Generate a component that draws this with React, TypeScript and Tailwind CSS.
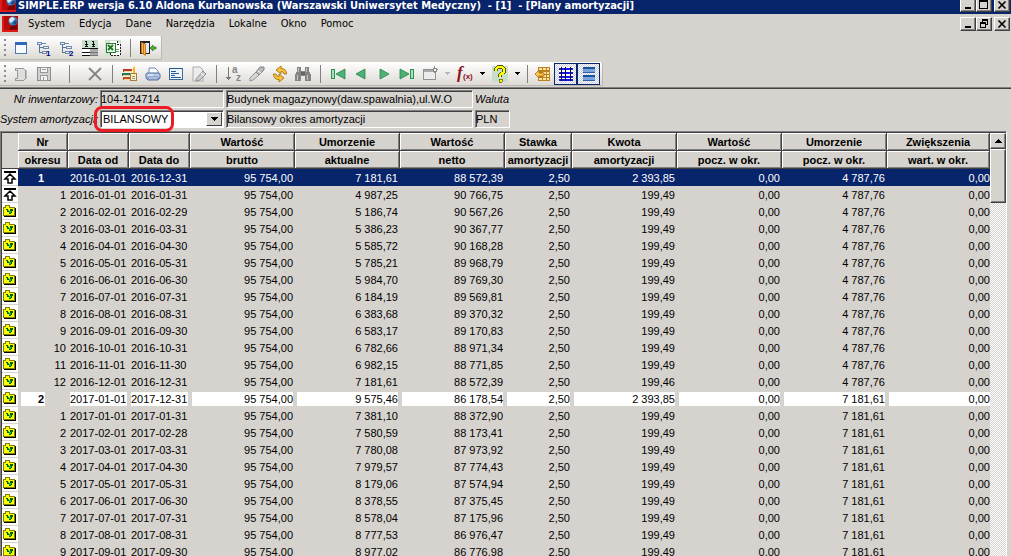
import type { FC, ReactNode } from "react";

interface Row {
  nr: number;
  from: string;
  to: string;
  depreciation: string;
  net: string;
  amount: string;
  opening: string;
  summary?: boolean;
}

const row = (
  nr: number,
  from: string,
  to: string,
  depreciation: string,
  net: string,
  amount: string,
  opening: string,
  summary = false,
): Row => ({ nr, from, to, depreciation, net, amount, opening, summary });

const rows: Row[] = [
  row(1, "2016-01-01", "2016-12-31", "7 181,61", "88 572,39", "2 393,85", "4 787,76", true),
  row(1, "2016-01-01", "2016-01-31", "4 987,25", "90 766,75", "199,49", "4 787,76"),
  row(2, "2016-02-01", "2016-02-29", "5 186,74", "90 567,26", "199,49", "4 787,76"),
  row(3, "2016-03-01", "2016-03-31", "5 386,23", "90 367,77", "199,49", "4 787,76"),
  row(4, "2016-04-01", "2016-04-30", "5 585,72", "90 168,28", "199,49", "4 787,76"),
  row(5, "2016-05-01", "2016-05-31", "5 785,21", "89 968,79", "199,49", "4 787,76"),
  row(6, "2016-06-01", "2016-06-30", "5 984,70", "89 769,30", "199,49", "4 787,76"),
  row(7, "2016-07-01", "2016-07-31", "6 184,19", "89 569,81", "199,49", "4 787,76"),
  row(8, "2016-08-01", "2016-08-31", "6 383,68", "89 370,32", "199,49", "4 787,76"),
  row(9, "2016-09-01", "2016-09-30", "6 583,17", "89 170,83", "199,49", "4 787,76"),
  row(10, "2016-10-01", "2016-10-31", "6 782,66", "88 971,34", "199,49", "4 787,76"),
  row(11, "2016-11-01", "2016-11-30", "6 982,15", "88 771,85", "199,49", "4 787,76"),
  row(12, "2016-12-01", "2016-12-31", "7 181,61", "88 572,39", "199,46", "4 787,76"),
  row(2, "2017-01-01", "2017-12-31", "9 575,46", "86 178,54", "2 393,85", "7 181,61", true),
  row(1, "2017-01-01", "2017-01-31", "7 381,10", "88 372,90", "199,49", "7 181,61"),
  row(2, "2017-02-01", "2017-02-28", "7 580,59", "88 173,41", "199,49", "7 181,61"),
  row(3, "2017-03-01", "2017-03-31", "7 780,08", "87 973,92", "199,49", "7 181,61"),
  row(4, "2017-04-01", "2017-04-30", "7 979,57", "87 774,43", "199,49", "7 181,61"),
  row(5, "2017-05-01", "2017-05-31", "8 179,06", "87 574,94", "199,49", "7 181,61"),
  row(6, "2017-06-01", "2017-06-30", "8 378,55", "87 375,45", "199,49", "7 181,61"),
  row(7, "2017-07-01", "2017-07-31", "8 578,04", "87 175,96", "199,49", "7 181,61"),
  row(8, "2017-08-01", "2017-08-31", "8 777,53", "86 976,47", "199,49", "7 181,61"),
  row(9, "2017-09-01", "2017-09-30", "8 977,02", "86 776,98", "199,49", "7 181,61"),
];

const columns = [
  { top: "Nr", bottom: "okresu", width: "w-[50px]" },
  { top: "", bottom: "Data od", width: "w-[61px]" },
  { top: "", bottom: "Data do", width: "w-[61px]" },
  { top: "Wartość", bottom: "brutto", width: "w-[105px]" },
  { top: "Umorzenie", bottom: "aktualne", width: "w-[105px]" },
  { top: "Wartość", bottom: "netto", width: "w-[105px]" },
  { top: "Stawka", bottom: "amortyzacji", width: "w-[67px]" },
  { top: "Kwota", bottom: "amortyzacji", width: "w-[105px]" },
  { top: "Wartość", bottom: "pocz. w okr.", width: "w-[105px]" },
  { top: "Umorzenie", bottom: "pocz. w okr.", width: "w-[105px]" },
  { top: "Zwiększenia", bottom: "wart. w okr.", width: "w-[103px]" },
];

const menu = ["System", "Edycja", "Dane", "Narzędzia", "Lokalne", "Okno", "Pomoc"];

const Icon: FC<{ children: ReactNode }> = ({ children }) => (
  <svg viewBox="0 0 16 16" className="w-4 h-4 shrink-0 overflow-visible" shapeRendering="crispEdges" aria-hidden="true">
    {children}
  </svg>
);

const Logo = () => (
  <Icon>
    <path d="M0 0H16V16H0z" fill="#b80a0a" />
    <path d="M0 0H2V16H0zM2 14H16V16H2z" fill="#e01818" />
    <path d="M10 9H15V14H7z" fill="#7d0000" />
    <g shapeRendering="auto">
      <circle cx="11" cy="5" r="4.6" fill="#3d7fc0" />
      <path d="M7 4Q8 1 11 1L13 3 9 7Q7 6 7 4z" fill="#d8ecfa" />
      <path d="M11 7L14 4 15 6Q14 9 12 9z" fill="#174a86" />
    </g>
  </Icon>
);

const WindowIcon = () => (
  <Icon>
    <path d="M2.5 2.5H13.5V13.5H2.5z" fill="#f6faff" stroke="#4a78b0" />
    <path d="M2 2H14V5H2z" fill="#2e6ab8" />
  </Icon>
);

const TreeIcon: FC<{ mark: string }> = ({ mark }) => (
  <Icon>
    <path d="M3.5 4V13M4 7.5H7M4 12.5H7" stroke="#5b7597" fill="none" />
    <path d="M1.5 2.5H5.5V4.5H1.5zM7.5 6.5H12.5V8.5H7.5zM6.5 11.5H10.5V13.5H6.5z" fill="#e7f0fb" stroke="#6d8cb4" />
    <path d="M6 3.5H10" stroke="#6d8cb4" />
    <text x="10" y="16" fontSize="8" fontWeight="700" fill="#00007b" fontFamily="Liberation Sans, sans-serif">
      {mark}
    </text>
  </Icon>
);

const ArchiveIcon = () => (
  <Icon>
    <path d="M0 0H16V8H0z" fill="#c7dfca" />
    <path d="M0 9H8V15H0z" fill="#fff" />
    <path d="M8 9H16V15H8z" fill="#aaa" />
    <path d="M0 8.5H16M0 12.5H8M0 15.5H8" stroke="#111" />
    <path d="M8 12.5H16M8 15.5H16" stroke="#777" />
    <path d="M3 1.5H5M4.5 2V7M3 4.5H6M3 6.5H6M10 1.5H12M11.5 2V7M10 4.5H13M10 6.5H13" stroke="#111" fill="none" />
  </Icon>
);

const SheetIcon = () => (
  <Icon>
    <path d="M0 0H16V16H0z" fill="#cfe3d2" />
    <path d="M5 1H12L15 4V15H5z" fill="#fff" />
    <path d="M12 1V4H15V15H5V13" fill="none" stroke="#222" strokeDasharray="2 1" />
    <path d="M7 9H14M7 11H14M10 5V13" stroke="#63a063" />
    <path d="M1 3H10V12H1z" fill="#eaf7ea" stroke="#2d7a35" />
    <path d="M3 5L8 10M8 5L3 10" stroke="#237a2c" strokeWidth="2" shapeRendering="auto" />
  </Icon>
);

const DoorIcon = () => (
  <Icon>
    <path d="M0 1H10V14H0z" fill="#222" />
    <path d="M5 3H9V13H5z" fill="#dceaff" />
    <path d="M1 2L6 4V16L1 13z" fill="#c87617" shapeRendering="auto" />
    <path d="M2.5 3V13M4.5 4V14" stroke="#ffb54e" />
    <path d="M10 8L13 5V7H16V9H13V11z" fill="#54b52c" stroke="#19711b" strokeWidth="0.7" shapeRendering="auto" />
  </Icon>
);

const NewIcon = () => (
  <Icon>
    <path d="M2.5 2.5H10.5L12.5 4.5V12.5L10.5 14.5H2.5V12.5H4.5V4.5H2.5z" fill="#dedede" stroke="#999" />
    <path d="M13.5 4V13" stroke="#bbb" />
  </Icon>
);

const SaveIcon = () => (
  <Icon>
    <path d="M1.5 1.5H14.5V14.5H1.5z" fill="#d2d2d2" stroke="#8d8d8d" />
    <path d="M4.5 1.5H11.5V6.5H4.5zM4.5 9.5H11.5V14.5H4.5z" fill="#f4f4f4" stroke="#999" />
    <path d="M6 3.5H10M7.5 11V14" stroke="#999" />
  </Icon>
);

const DeleteIcon = () => (
  <Icon>
    <path d="M2 2L8 8L14 14M14 2L2 14" stroke="#848484" strokeWidth="1.8" fill="none" shapeRendering="auto" />
  </Icon>
);

const BooksIcon = () => (
  <Icon>
    <path d="M1 3H10V6H1z" fill="#b83a22" />
    <path d="M0 7H9V10H0z" fill="#1f7a51" />
    <path d="M1 11H9V14H1z" fill="#c05218" />
    <path d="M2 5.5H10M1 9.5H9M2 13.5H9" stroke="#f0d5a0" />
    <path d="M8.5 7.5H14.5V14.5H8.5z" fill="#fff0c8" stroke="#a57a31" />
    <path d="M10 10.5H13M10 12.5H13" stroke="#8e8e8e" />
    <path d="M11 2L13 0 13 7 11 7z" fill="#ffb21d" shapeRendering="auto" />
  </Icon>
);

const PrinterIcon = () => (
  <Icon>
    <g shapeRendering="auto">
      <path d="M4 8V2H10L13 5V8z" fill="#fff" stroke="#7088b5" />
      <path d="M1 8Q1 7 3 7H13Q15 7 15 8V12L13 14H3L1 12z" fill="#b7c7e5" stroke="#4d6da5" />
      <path d="M3 11H13V13H3z" fill="#eef4ff" stroke="#7088b5" />
      <path d="M3 9H8" stroke="#fff" />
    </g>
  </Icon>
);

const FormIcon = () => (
  <Icon>
    <path d="M1.5 2.5H14.5V13.5H1.5z" fill="#eef5fd" stroke="#3b6994" />
    <path d="M2 2.5H14" stroke="#1d5896" />
    <path d="M3 5.5H8M3 7.5H11M3 9.5H7M3 11.5H13" stroke="#245a9c" />
  </Icon>
);

const PageIcon = () => (
  <Icon>
    <g shapeRendering="auto">
      <path d="M2 1H9L12 4V15H2z" fill="#ececec" stroke="#aaa" />
      <path d="M5 13L12 5 15 8 9 14 5 15z" fill="#ccc" stroke="#929292" />
      <path d="M10 7L13 10" stroke="#fff" />
    </g>
  </Icon>
);

const SortIcon = () => (
  <Icon>
    <path d="M2.5 1V13" stroke="#777" />
    <path d="M0 11H5L2.5 14z" fill="#777" />
    <text x="6" y="7" fontSize="10" fontWeight="700" fill="#858585" fontFamily="Liberation Sans, sans-serif">a</text>
    <text x="10" y="15" fontSize="10" fontWeight="700" fill="#858585" fontFamily="Liberation Sans, sans-serif">z</text>
  </Icon>
);

const TorchIcon = () => (
  <Icon>
    <g shapeRendering="auto">
      <path d="M1 12L7 6 10 9 4 14 1 15z" fill="#d8d8d8" stroke="#919191" />
      <path d="M7 6L11 1 15 1 15 4 10 9z" fill="#bababa" stroke="#858585" />
      <path d="M9 5L12 7" stroke="#fff" />
    </g>
  </Icon>
);

const RefreshIcon = () => (
  <Icon>
    <g shapeRendering="auto" fill="#f6c43a" stroke="#ae7110" strokeWidth="0.9">
      <path d="M4 4L9 0V2.5Q14.5 2.5 14.5 8H12Q12 5.5 9 5.5V8z" />
      <path d="M12 12L7 16V13.5Q1.5 13.5 1.5 8H4Q4 10.5 7 10.5V8z" />
    </g>
  </Icon>
);

const BinocularsIcon = () => (
  <Icon>
    <path d="M2 1H6V5H10V1H14V5L16 9V15H10V10H6V15H0V9L2 5z" fill="#858585" />
    <path d="M3.5 2V6M11.5 2V6M2.5 9V14M12.5 9V14" stroke="#c5c5c5" />
    <path d="M6 6H10V9H6z" fill="#666" />
  </Icon>
);

const ArrowIcon: FC<{ back?: boolean; end?: boolean }> = ({ back, end }) => (
  <Icon>
    <g transform={back ? "matrix(-1 0 0 1 16 0)" : undefined}>
      <path
        d={end ? "M1 3L10 8 1 13z" : "M4 3L13 8 4 13z"}
        fill="#4fb173"
        stroke="#248348"
        strokeWidth="0.8"
        shapeRendering="auto"
      />
      {end && <path d="M11.5 3.5H14.5V12.5H11.5z" fill="#a6dfb8" stroke="#2b9354" />}
    </g>
  </Icon>
);

const NewWindowIcon = () => (
  <Icon>
    <path d="M1.5 3.5H13.5V13.5H1.5z" fill="#ececec" stroke="#929292" />
    <path d="M2 5H13" stroke="#aaa" strokeWidth="2" />
    <path d="M12.5 0V7M9 3.5H16" stroke="#8b8b8b" />
    <path d="M11 2H14V5H11z" fill="#fff" stroke="#8b8b8b" />
  </Icon>
);

const FunctionIcon = () => (
  <Icon>
    <text x="0" y="12" fontSize="17" fontStyle="italic" fontWeight="700" fill="#8c1420" fontFamily="Liberation Serif, serif">f</text>
    <text x="6" y="13" fontSize="8" fontWeight="700" fill="#8c1420" fontFamily="Liberation Sans, sans-serif">(x)</text>
  </Icon>
);

const HelpIcon = () => (
  <Icon>
    <path d="M0 0H16V16H0z" fill="#c7dfca" />
    <g fill="none" strokeLinejoin="round">
      <path d="M4 5V3L6 1H10L12 3V6L8 9V11" stroke="#555500" strokeWidth="3.4" />
      <path d="M4 5V3L6 1H10L12 3V6L8 9V11" stroke="#ffff00" strokeWidth="2.4" />
    </g>
    <path d="M7 13H10V16H7z" fill="#ffff00" stroke="#555500" strokeWidth="0.7" />
  </Icon>
);

const ColumnsIcon = () => (
  <Icon>
    <path d="M3 1H15V15H3z" fill="#b98122" />
    <path d="M4 2H7V4H4zM8 2H11V4H8zM12 2H14V4H12zM8 6H11V8H8zM12 6H14V8H12zM4 12H7V14H4zM8 12H11V14H8zM12 12H14V14H12zM8 9H11V11H8zM12 9H14V11H12z" fill="#ffe4a0" />
    <path d="M0 8L4 4V7H9V10H4V12z" fill="#ffc64b" stroke="#a66914" strokeWidth="0.8" shapeRendering="auto" />
  </Icon>
);

const GridIcon = () => (
  <Icon>
    <path d="M1 1H15V15H1z" fill="#fff" />
    <path d="M1 3H15M1 7H15M1 11H15M1 14H15" stroke="#1717ee" strokeWidth="2" />
    <path d="M3.5 1V15M7.5 1V15M12.5 1V15" stroke="#101018" />
  </Icon>
);

const SplitIcon = () => (
  <Icon>
    <path d="M2 1H14V7H2zM2 9H14V15H2z" fill="#77a5dc" />
    <path d="M2 2H14M2 10H14" stroke="#15539b" strokeWidth="2" />
    <path d="M2 6.5H14M2 14.5H14" stroke="#2f62a8" />
  </Icon>
);

const UpIcon = () => (
  <svg viewBox="0 0 14 14" className="block w-[14px] h-[14px]" aria-hidden="true">
    <path d="M1 2H13" stroke="#000" strokeWidth="2" shapeRendering="crispEdges" />
    <path d="M7 4L12 9H9V13H5V9H2z" fill="#fff" stroke="#000" strokeWidth="1.5" />
  </svg>
);

const FolderIcon = () => (
  <svg viewBox="0 0 14 14" className="block w-[14px] h-[14px]" shapeRendering="crispEdges" aria-hidden="true">
    <path d="M.5 11.5V3.5H2.5V1.5H6.5V3.5H11.5V11.5z" fill="#ffff00" stroke="#808000" />
    <path d="M1 12.5H12.5V4" fill="none" stroke="#000" />
    <path d="M3 5H5V7H7V5H10V7H9V9H8V10H6V8H4V6H3z" fill="#006000" />
    <path d="M5 6H6V7H5zM6 7H8V9H6z" fill="#00c060" />
  </svg>
);

const Tool: FC<{ label: string; className?: string; children: ReactNode }> = ({
  label,
  className = "w-[23px]",
  children,
}) => (
  <button type="button" aria-label={label} className={`flex h-[22px] shrink-0 items-center justify-center ${className}`}>
    {children}
  </button>
);

const DropDown: FC<{ label: string; disabled?: boolean }> = ({ label, disabled }) => (
  <Tool label={label} className="w-3">
    <svg viewBox="0 0 5 3" className="w-[5px] h-[3px]" shapeRendering="crispEdges">
      <path d="M0 0H5L2.5 3z" fill={disabled ? "#b5b5b5" : "#000"} />
    </svg>
  </Tool>
);

const Separator: FC<{ className?: string }> = ({ className = "w-3" }) => (
  <div className={`flex h-[18px] shrink-0 justify-center ${className}`}>
    <div className="w-px bg-[#808080]" />
  </div>
);

const Toolbar: FC<{ label: string; children: ReactNode }> = ({ label, children }) => (
  <div
    role="toolbar"
    aria-label={label}
    className="flex h-6 w-fit items-center rounded-r-xs border-r border-b border-[#bcb9b3] bg-linear-to-b from-white to-[#dedbd6] pr-[2px]"
  >
    <div className="flex w-[9px] flex-col items-center gap-[3px]">
      {[0, 1, 2, 3].map((dot) => (
        <div key={dot} className="h-[2px] w-[2px] bg-[#8c8c8c]" />
      ))}
    </div>
    {children}
  </div>
);

const WindowButtons: FC<{ restore?: boolean }> = ({ restore }) => {
  const button =
    "flex h-[14px] w-4 items-center justify-center border border-t-white border-l-white border-r-[#404040] border-b-[#404040] bg-[#d6d3ce] shadow-[inset_-1px_-1px_0_#808080]";
  const svg = "w-[10px] h-[10px]";
  return (
    <div className="ml-auto flex shrink-0">
      <button type="button" aria-label="Minimalizuj" className={button}>
        <svg viewBox="0 0 10 10" className={svg} shapeRendering="crispEdges">
          <path d="M2 7H8V9H2z" />
        </svg>
      </button>
      <button type="button" aria-label={restore ? "Przywróć" : "Maksymalizuj"} className={button}>
        <svg viewBox="0 0 10 10" className={svg} shapeRendering="crispEdges" fill="none" stroke="#000">
          {restore ? (
            <path d="M3.5 4V1.5H8.5V5.5H6.5M3 .5H9M1.5 4.5H6.5V8.5H1.5zM1 3.5H7" />
          ) : (
            <path d="M.5 .5H8.5V8.5H.5zM0 1.5H9" />
          )}
        </svg>
      </button>
      <button type="button" aria-label="Zamknij" className={`ml-[2px] ${button}`}>
        <svg viewBox="0 0 10 10" className={svg} stroke="#000" strokeWidth="1.6">
          <path d="M1.5 1.5L8.5 8.5M8.5 1.5L1.5 8.5" />
        </svg>
      </button>
    </div>
  );
};

const field =
  "h-[18px] w-full min-w-0 border border-t-[#808080] border-l-[#808080] border-r-white border-b-white shadow-[inset_1px_1px_0_#404040] outline-none";

const Filters = () => (
  <form className="grid grid-cols-[98px_124px_247px_35px] items-center gap-x-[2px] gap-y-[2px] pt-px pb-[3px] whitespace-nowrap">
    <label htmlFor="inventory" className="text-right italic">
      Nr inwentarzowy:
    </label>
    <input id="inventory" readOnly value="104-124714" className={field} />
    <input aria-label="Nazwa środka" readOnly value="Budynek magazynowy(daw.spawalnia),ul.W.O" className={field} />
    <label htmlFor="currency" className="italic">
      Waluta
    </label>
    <label htmlFor="system" className="text-right italic">
      System amortyzacji:
    </label>
    <div className="relative">
      <select id="system" defaultValue="BILANSOWY" className={`block appearance-none bg-white pl-[2px] ${field}`}>
        <option>BILANSOWY</option>
      </select>
      <span className="pointer-events-none absolute top-[2px] right-[2px] flex h-[14px] w-4 items-center justify-center border border-t-white border-l-white border-r-[#404040] border-b-[#404040] bg-[#d6d3ce]">
        <svg viewBox="0 0 7 4" className="w-[7px] h-1" shapeRendering="crispEdges">
          <path d="M0 0H7L3.5 4z" />
        </svg>
      </span>
      <div className="pointer-events-none absolute -top-1 -left-[6px] h-[26px] w-20 rounded-lg border-3 border-[#ed1c24]" />
    </div>
    <input aria-label="Opis systemu" readOnly value="Bilansowy okres amortyzacji" className={field} />
    <input id="currency" readOnly value="PLN" className={field} />
  </form>
);

const headCell =
  "h-[18px] p-0 border-r border-b border-[#404040] shadow-[inset_1px_1px_0_#fff,inset_-1px_-1px_0_#808080] text-center font-bold leading-4 overflow-hidden";

const PlanTable = () => (
  <table className="min-w-0 flex-1 table-fixed border-separate border-spacing-0 whitespace-nowrap">
    <colgroup>
      <col className="w-4" />
      {columns.map((column, index) => (
        <col key={index} className={column.width} />
      ))}
    </colgroup>
    <thead>
      <tr>
        <td rowSpan={2} className="border-b border-[#404040] p-0" />
        {columns.map((column, index) => (
          <th key={index} className={headCell}>
            {column.top}
          </th>
        ))}
      </tr>
      <tr>
        {columns.map((column, index) => (
          <th key={index} className={headCell}>
            {column.bottom}
          </th>
        ))}
      </tr>
    </thead>
    <tbody>
      {rows.map((item, index) => {
        const selected = index === 0;
        const white = item.summary && !selected ? "bg-white" : "";
        const cells = [
          item.from,
          item.to,
          "95 754,00",
          item.depreciation,
          item.net,
          "2,50",
          item.amount,
          "0,00",
          item.opening,
          "0,00",
        ];
        return (
          <tr key={index} className={selected ? "bg-[#08246b] text-white" : ""}>
            <td className="h-[17px] border-b border-[#d6d3ce] bg-white p-0 pl-px">
              {index < 2 ? <UpIcon /> : <FolderIcon />}
            </td>
            <td className="p-0 pr-[2px] pl-[3px] text-right">
              <span className={`block h-[14px] leading-[14px] ${item.summary ? "w-6 pr-px font-bold" : ""} ${white}`}>
                {item.nr}
              </span>
            </td>
            {cells.map((cell, column) => (
              <td key={column} className={`p-0 pl-[2px] ${column < 2 ? "pr-[2px] text-left" : column < 9 ? "pr-[2px] text-right" : "text-right"}`}>
                <span className={`block h-[14px] leading-[14px] ${white}`}>{cell}</span>
              </td>
            ))}
          </tr>
        );
      })}
    </tbody>
  </table>
);

const ScrollBar = () => (
  <div className="flex w-4 shrink-0 flex-col bg-[conic-gradient(#fff_25%,#d6d3ce_0_50%,#fff_0_75%,#d6d3ce_0)] bg-size-[2px_2px]">
    <button
      type="button"
      aria-label="Przewiń w górę"
      className="flex h-4 items-center justify-center border border-t-white border-l-white border-r-[#404040] border-b-[#404040] bg-[#d6d3ce] shadow-[inset_-1px_-1px_0_#808080]"
    >
      <svg viewBox="0 0 7 4" className="w-[7px] h-1" shapeRendering="crispEdges">
        <path d="M0 4H7L3.5 0z" />
      </svg>
    </button>
    <div className="h-[54px] border border-t-white border-l-white border-r-[#404040] border-b-[#404040] bg-[#d6d3ce] shadow-[inset_-1px_-1px_0_#808080]" />
  </div>
);

const App = () => {
  return (
    <div className="flex h-screen flex-col overflow-hidden bg-[#d6d3ce] font-['Liberation_Sans',Arial,sans-serif] text-[11px] text-black">
      <header className="flex h-[14px] shrink-0 items-end gap-[2px] overflow-hidden bg-[#08246b] pr-px pb-[2px] font-['DejaVu_Sans_Condensed','DejaVu_Sans',sans-serif]">
        <Logo />
        <h1 className="pb-px text-[11px] leading-[11px] font-bold whitespace-pre text-white">
          SIMPLE.ERP wersja 6.10 Aldona Kurbanowska (Warszawski Uniwersytet Medyczny)  - [1]  - [Plany amortyzacji]
        </h1>
        <WindowButtons />
      </header>

      <nav className="flex h-[22px] shrink-0 items-center gap-[2px] pr-px pb-[2px] pl-[2px] font-['DejaVu_Sans_Condensed','DejaVu_Sans',sans-serif]">
        <Logo />
        <div className="flex">
          {menu.map((item) => (
            <button key={item} type="button" className="px-[7px] first:pl-2">
              {item}
            </button>
          ))}
        </div>
        <WindowButtons restore />
      </nav>

      <div className="flex shrink-0 flex-col gap-[2px] border-b border-[#404040] pb-[2px] shadow-[inset_0_-1px_0_#808080]">
        <Toolbar label="Aplikacja">
          <Tool label="Okno"><WindowIcon /></Tool>
          <Tool label="Drzewo 1"><TreeIcon mark="1" /></Tool>
          <Tool label="Drzewo 2"><TreeIcon mark="2" /></Tool>
          <Tool label="Archiwum"><ArchiveIcon /></Tool>
          <Tool label="Arkusz"><SheetIcon /></Tool>
          <Separator />
          <Tool label="Wyjście"><DoorIcon /></Tool>
        </Toolbar>
        <Toolbar label="Dane">
          <Tool label="Nowy"><NewIcon /></Tool>
          <Tool label="Zapisz"><SaveIcon /></Tool>
          <Separator className="w-7" />
          <Tool label="Usuń"><DeleteIcon /></Tool>
          <Separator />
          <Tool label="Słowniki"><BooksIcon /></Tool>
          <Tool label="Drukuj"><PrinterIcon /></Tool>
          <Tool label="Formularz"><FormIcon /></Tool>
          <Tool label="Edytuj"><PageIcon /></Tool>
          <Separator />
          <Tool label="Sortuj"><SortIcon /></Tool>
          <Tool label="Filtr"><TorchIcon /></Tool>
          <Tool label="Odśwież"><RefreshIcon /></Tool>
          <Tool label="Szukaj"><BinocularsIcon /></Tool>
          <Separator />
          <Tool label="Pierwszy"><ArrowIcon back end /></Tool>
          <Tool label="Poprzedni"><ArrowIcon back /></Tool>
          <Tool label="Następny"><ArrowIcon /></Tool>
          <Tool label="Ostatni"><ArrowIcon end /></Tool>
          <Tool label="Nowe okno"><NewWindowIcon /></Tool>
          <DropDown label="Lista okien" disabled />
          <Tool label="Funkcje"><FunctionIcon /></Tool>
          <DropDown label="Lista funkcji" />
          <Tool label="Pomoc"><HelpIcon /></Tool>
          <DropDown label="Tematy pomocy" />
          <Separator className="w-2" />
          <Tool label="Kolumny"><ColumnsIcon /></Tool>
          <Tool label="Siatka" className="w-[23px] border border-[#08246b] bg-[conic-gradient(#fff_25%,#c5cbdc_0_50%,#fff_0_75%,#c5cbdc_0)] bg-size-[2px_2px]">
            <GridIcon />
          </Tool>
          <Tool label="Podział" className="w-[23px] border border-[#08246b] bg-[conic-gradient(#fff_25%,#c5cbdc_0_50%,#fff_0_75%,#c5cbdc_0)] bg-size-[2px_2px]">
            <SplitIcon />
          </Tool>
        </Toolbar>
      </div>

      <Filters />

      <main className="mr-1 flex min-h-0 flex-1 border-t border-r border-l border-t-[#808080] border-r-white border-l-[#808080]">
        <div className="flex min-w-0 flex-1 items-stretch overflow-hidden border-t border-l border-[#404040]">
          <div className="flex min-w-0 flex-1 items-start">
            <PlanTable />
          </div>
          <ScrollBar />
        </div>
      </main>
    </div>
  );
};

export default App;
